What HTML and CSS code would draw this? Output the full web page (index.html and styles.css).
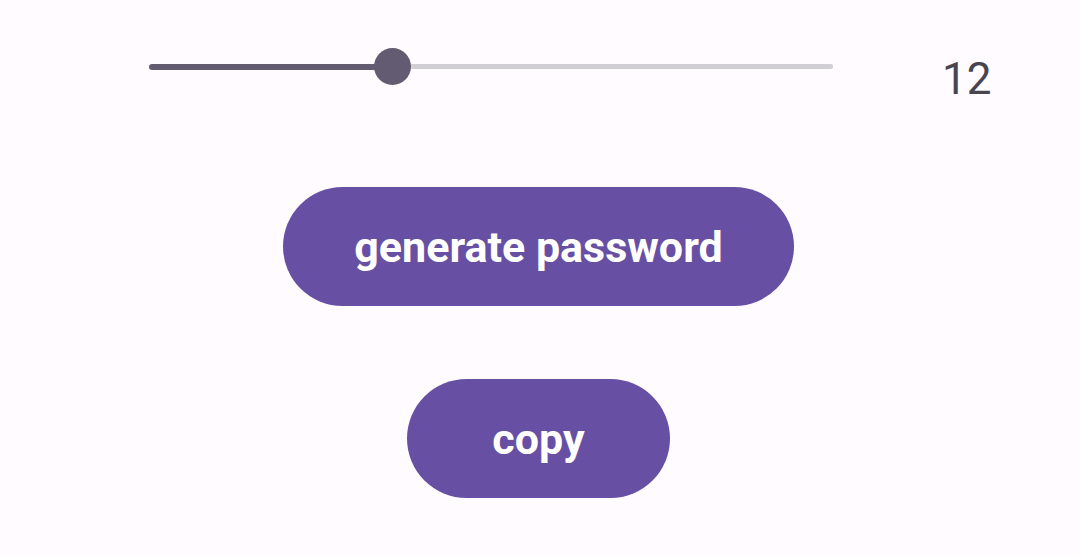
FILE: index.html
```html
<!DOCTYPE html>
<html>
<head>
<meta charset="utf-8">
<link rel="stylesheet" href="styles.css">
</head>
<body>
<div class="screen">
  <div class="slider-row">
    <div class="slider">
      <div class="track-active"></div>
      <div class="thumb"></div>
      <div class="track-inactive"></div>
    </div>
    <div class="value">12</div>
  </div>
  <div class="actions">
    <button class="btn btn-generate">generate password</button>
    <button class="btn btn-copy">copy</button>
  </div>
</div>
</body>
</html>
```

FILE: styles.css
```css
html, body {
  margin: 0;
  padding: 0;
  background: #fffbfe;
  font-family: Roboto, "Liberation Sans", sans-serif;
}
.screen {
  width: 1080px;
  height: 557px;
  display: flex;
  flex-direction: column;
}
.slider-row {
  display: flex;
  align-items: flex-start;
  padding-top: 48px;
  padding-left: 149px;
}
.slider {
  display: flex;
  align-items: center;
  width: 684px;
  height: 37px;
}
.track-active {
  width: 226px;
  height: 6px;
  background: #625b71;
  border-radius: 3px 0 0 3px;
}
.thumb {
  width: 37px;
  height: 37px;
  border-radius: 50%;
  background: #625b71;
  flex: none;
  margin-left: -1px;
}
.track-inactive {
  flex: 1;
  height: 5px;
  background: #d2cfd4;
  border-radius: 0 2px 2px 0;
}
.value {
  margin-left: 109px;
  margin-top: 5px;
  font-size: 44px;
  line-height: 52px;
  color: #49454f;
}
.actions {
  display: flex;
  flex-direction: column;
  align-items: center;
  gap: 73px;
  margin-top: 82px;
  padding-right: 3px;
}
.btn {
  border: none;
  background: #6750a4;
  color: #ffffff;
  font-family: Roboto, "Liberation Sans", sans-serif;
  font-weight: 700;
  font-size: 43px;
  height: 119px;
  border-radius: 60px;
  padding: 0;
  display: flex;
  align-items: center;
  justify-content: center;
}
.btn-generate {
  width: 511px;
}
.btn-copy {
  width: 263px;
}
```
